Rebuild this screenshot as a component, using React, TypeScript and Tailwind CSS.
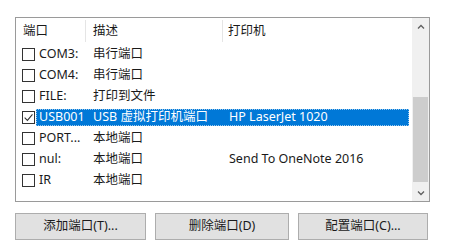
import React from 'react';

type Port = { name: string; desc: string; printer: string; checked?: boolean; selected?: boolean };

const ports: Port[] = [
    { name: 'COM3:', desc: '串行端口', printer: '' },
    { name: 'COM4:', desc: '串行端口', printer: '' },
    { name: 'FILE:', desc: '打印到文件', printer: '' },
    { name: 'USB001', desc: 'USB 虚拟打印机端口', printer: 'HP LaserJet 1020', checked: true, selected: true },
    { name: 'PORT...', desc: '本地端口', printer: '' },
    { name: 'nul:', desc: '本地端口', printer: 'Send To OneNote 2016' },
    { name: 'IR', desc: '本地端口', printer: '' },
];

const CheckBox: React.FC<{ checked?: boolean }> = ({ checked }) => (
    <div className="w-[13px] h-[13px] border border-[#333333] bg-white flex items-center justify-center shrink-0">
        {checked && (
            <svg width="11" height="11" viewBox="0 0 10 10" fill="none">
                <path d="M1.5 5.2 L4 7.6 L8.6 2.2" stroke="#333333" strokeWidth="1" />
            </svg>
        )}
    </div>
);

const Chevron: React.FC<{ up?: boolean }> = ({ up }) => (
    <svg width="8" height="6" viewBox="0 0 8 6" fill="none">
        <path d={up ? 'M1 4.5 L4 1.5 L7 4.5' : 'M1 1.5 L4 4.5 L7 1.5'} stroke="#606060" strokeWidth="1.3" />
    </svg>
);

export default function App() {
    return (
        <div
            className="w-[452px] h-[251px] bg-white pt-[17px] pl-[15px] text-[12.5px] text-[#1a1a1a] overflow-hidden"
            style={{ fontFamily: '"Noto Sans", "Noto Sans CJK SC", sans-serif' }}
        >
            <div className="flex w-[415px] h-[185px] border border-[#9a9a9a]">
                <div className="flex-1 flex flex-col">
                    <div className="flex h-[24px] items-center shrink-0 pt-[2px]">
                        <div className="w-[70px] h-full flex items-center pl-[7px] border-r border-[#e5e5e5]">端口</div>
                        <div className="w-[137px] h-full flex items-center pl-[7px] border-r border-[#e5e5e5]">描述</div>
                        <div className="flex-1 h-full flex items-center pl-[5px]">打印机</div>
                    </div>
                    <div className="flex flex-col mt-[2px]">
                        {ports.map((p) => (
                            <div key={p.name} className="flex items-center h-[21px] pl-[6px] pr-[3px]">
                                <CheckBox checked={p.checked} />
                                <div
                                    className={
                                        p.selected
                                            ? 'flex-1 flex items-center h-[17px] ml-[1px] bg-[#0078d7] text-white outline-1 outline-dotted outline-offset-[-1px] outline-[#99c9ef]'
                                            : 'flex-1 flex items-center h-[17px] ml-[1px]'
                                    }
                                >
                                    <div className="w-[50px] pl-[3px] whitespace-nowrap">{p.name}</div>
                                    <div className="w-[137px] pl-[7px] whitespace-nowrap">{p.desc}</div>
                                    <div className="flex-1 pl-[6px] whitespace-nowrap">{p.printer}</div>
                                </div>
                            </div>
                        ))}
                    </div>
                </div>
                <div className="w-[17px] h-full bg-[#f0f0f0] flex flex-col">
                    <div className="h-[17px] flex items-center justify-center shrink-0">
                        <Chevron up />
                    </div>
                    <div className="flex-1 flex flex-col">
                        <div className="mt-[62px] h-[85px] mx-[1px] bg-[#cdcdcd]" />
                    </div>
                    <div className="h-[17px] flex items-center justify-center shrink-0">
                        <Chevron />
                    </div>
                </div>
            </div>
            <div className="flex mt-[11px] gap-[9px]">
                <button className="w-[131px] h-[27px] bg-[#e1e1e1] border border-[#adadad]">添加端口(T)...</button>
                <button className="w-[134px] h-[27px] bg-[#e1e1e1] border border-[#adadad]">删除端口(D)</button>
                <button className="w-[130px] h-[27px] bg-[#e1e1e1] border border-[#adadad]">配置端口(C)...</button>
            </div>
        </div>
    );
}
